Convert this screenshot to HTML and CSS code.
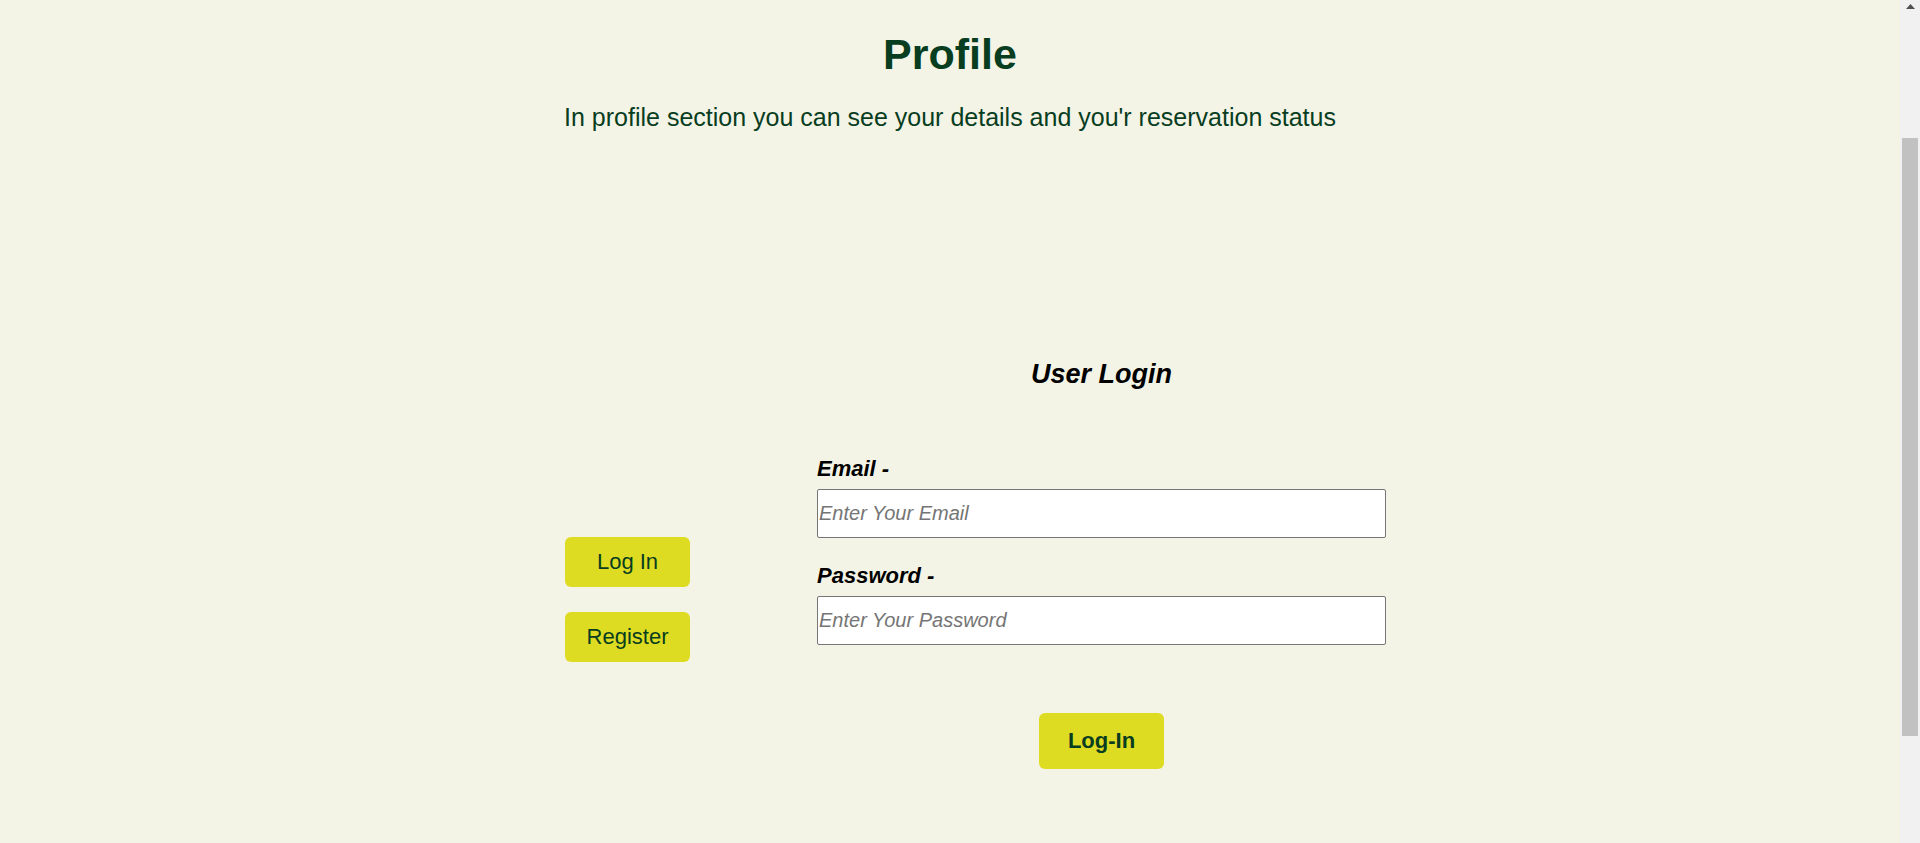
FILE: index.html
```html
<!DOCTYPE html>
<html lang="en">
<head>
<meta charset="utf-8">
<title>Profile</title>
<link rel="stylesheet" href="styles.css">
</head>
<body>
<div class="page">
  <main class="content">
    <h1 class="title">Profile</h1>
    <p class="subtitle">In profile section you can see your details and you'r reservation status</p>
    <section class="main">
      <div class="side">
        <button class="side-btn" type="button">Log In</button>
        <button class="side-btn" type="button">Register</button>
      </div>
      <form class="login-form">
        <h2 class="form-title">User Login</h2>
        <label class="field-label" for="email">Email -</label>
        <input class="field-input" id="email" type="email" placeholder="Enter Your Email">
        <label class="field-label field-label--second" for="password">Password -</label>
        <input class="field-input" id="password" type="password" placeholder="Enter Your Password">
        <div class="submit-row">
          <button class="submit-btn" type="button">Log-In</button>
        </div>
      </form>
    </section>
  </main>
  <div class="scrollbar" aria-hidden="true">
    <div class="scroll-arrow">
      <svg width="9" height="5" viewBox="0 0 9 5"><path d="M4.5 0 L9 5 L0 5 Z" fill="#505050"/></svg>
    </div>
    <div class="scroll-track">
      <div class="scroll-thumb"></div>
    </div>
  </div>
</div>
</body>
</html>
```

FILE: styles.css
```css
html, body {
  margin: 0;
  padding: 0;
  height: 100%;
  overflow: hidden;
}

body {
  background: #f3f4e5;
  font-family: "Liberation Sans", Arial, sans-serif;
}

.page {
  display: flex;
  height: 843px;
}

.content {
  flex: 1;
  padding-top: 30px;
}

.title {
  margin: 0;
  font-size: 43px;
  line-height: 48px;
  font-weight: bold;
  color: #083d1f;
  text-align: center;
}

.subtitle {
  margin: 25px 0 0;
  font-size: 25px;
  line-height: 29px;
  color: #083d1f;
  text-align: center;
}

.main {
  display: flex;
  align-items: flex-start;
  padding-left: 565px;
  margin-top: 227px;
}

.side {
  display: flex;
  flex-direction: column;
  gap: 25px;
  width: 125px;
  margin-top: 178px;
}

.side-btn {
  width: 125px;
  height: 50px;
  border: none;
  border-radius: 6px;
  background: #dedc22;
  color: #083d1f;
  font-family: "Liberation Sans", Arial, sans-serif;
  font-size: 22px;
  padding: 0;
}

.login-form {
  width: 569px;
  margin-left: 127px;
  display: flex;
  flex-direction: column;
}

.form-title {
  margin: 0;
  font-size: 27px;
  line-height: 31px;
  font-weight: bold;
  font-style: italic;
  color: #000;
  text-align: center;
}

.field-label {
  display: block;
  margin-top: 66px;
  margin-bottom: 8px;
  font-size: 22px;
  line-height: 25px;
  font-weight: bold;
  font-style: italic;
  color: #000;
}

.field-label--second {
  margin-top: 25px;
}

.field-input {
  box-sizing: border-box;
  width: 569px;
  height: 49px;
  margin: 0;
  padding: 0 1px;
  border: 1px solid #767676;
  border-radius: 2px;
  background: #fff;
  font-family: "Liberation Sans", Arial, sans-serif;
  font-size: 20px;
  font-style: italic;
  color: #000;
}

.field-input::placeholder {
  color: #757575;
  font-style: italic;
}

.submit-row {
  display: flex;
  justify-content: center;
  margin-top: 68px;
}

.submit-btn {
  width: 125px;
  height: 56px;
  border: none;
  border-radius: 6px;
  background: #dedc22;
  color: #083d1f;
  font-family: "Liberation Sans", Arial, sans-serif;
  font-size: 22px;
  font-weight: bold;
  padding: 0;
}

.scrollbar {
  width: 20px;
  background: #f1f1f1;
  display: flex;
  flex-direction: column;
}

.scroll-arrow {
  height: 17px;
  display: flex;
  justify-content: center;
  padding-top: 4px;
  box-sizing: border-box;
  padding-left: 1px;
}

.scroll-arrow svg {
  display: block;
}

.scroll-track {
  flex: 1;
  padding: 121px 2px 0 2px;
}

.scroll-thumb {
  height: 598px;
  background: #c1c1c1;
}
```
